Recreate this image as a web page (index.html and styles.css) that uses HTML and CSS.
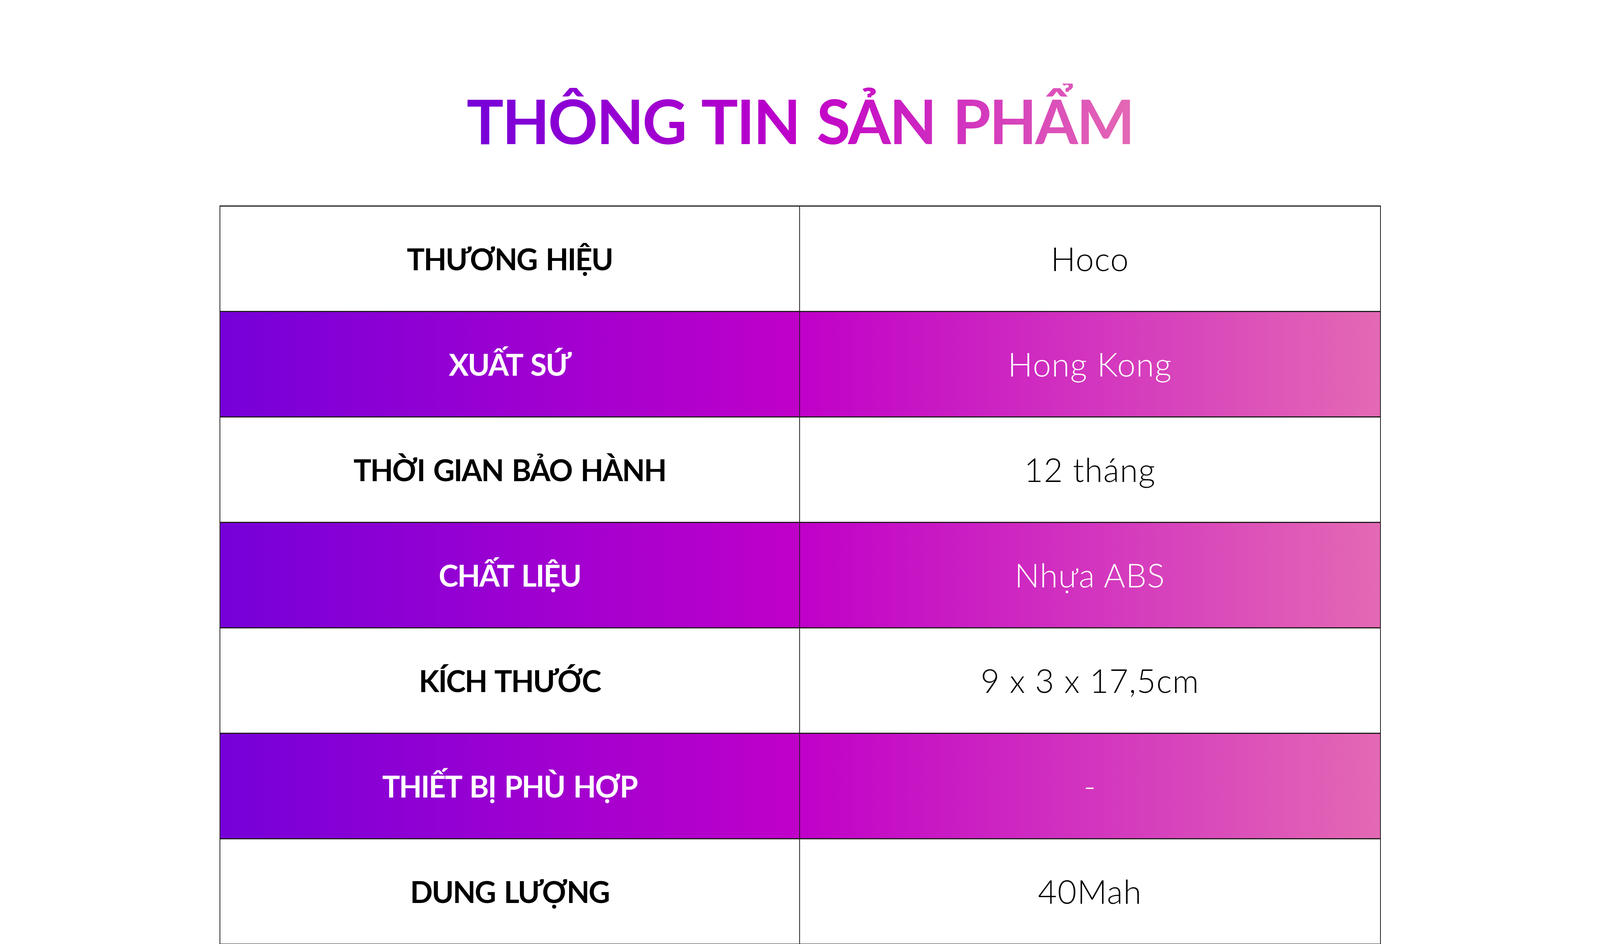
FILE: index.html
```html
<!DOCTYPE html>
<html lang="vi">
<head>
<meta charset="utf-8">
<title>Thông tin sản phẩm</title>
<link rel="stylesheet" href="styles.css">
</head>
<body>
<main class="page">
  <h1 class="title"><span class="title-text">THÔNG TIN SẢN PHẨM</span></h1>
  <div class="spec">
    <div class="row">
      <div class="cell label">THƯƠNG HIỆU</div>
      <div class="cell value">Hoco</div>
    </div>
    <div class="row row-accent">
      <div class="cell label">XUẤT SỨ</div>
      <div class="cell value">Hong Kong</div>
    </div>
    <div class="row">
      <div class="cell label">THỜI GIAN BẢO HÀNH</div>
      <div class="cell value">12 tháng</div>
    </div>
    <div class="row row-accent">
      <div class="cell label">CHẤT LIỆU</div>
      <div class="cell value">Nhựa ABS</div>
    </div>
    <div class="row">
      <div class="cell label">KÍCH THƯỚC</div>
      <div class="cell value">9 x 3 x 17,5cm</div>
    </div>
    <div class="row row-accent">
      <div class="cell label">THIẾT BỊ PHÙ HỢP</div>
      <div class="cell value">-</div>
    </div>
    <div class="row">
      <div class="cell label">DUNG LƯỢNG</div>
      <div class="cell value">40Mah</div>
    </div>
  </div>
</main>
</body>
</html>
```

FILE: styles.css
```css
html, body {
  margin: 0;
  padding: 0;
  background: #ffffff;
}

.page {
  font-family: Lato, "Noto Sans", sans-serif;
  padding-top: 214px;
}

.title {
  margin: 0 0 122px 0;
  text-align: center;
  font-size: 158px;
  line-height: 1.2;
  font-weight: 700;
  letter-spacing: -4px;
  word-spacing: 10px;
}

.title-text {
  display: inline-block;
  background: linear-gradient(90deg, #7600d9 0%, #c000c9 50%, #e469b4 100%);
  -webkit-background-clip: text;
  background-clip: text;
  color: transparent;
  -webkit-text-fill-color: transparent;
}

.spec {
  width: 2973px;
  margin: 0 auto;
  box-sizing: border-box;
  border-top: 3px solid #231f20;
  border-left: 2px solid #231f20;
  border-right: 2px solid #231f20;
}

.row {
  display: grid;
  grid-template-columns: 1fr 1fr;
  height: 270px;
  box-sizing: border-box;
  border-bottom: 3px solid #231f20;
  color: #000000;
}

.row-accent {
  background: linear-gradient(90deg, #7600d9 0%, #c000c9 50%, #e469b4 100%);
  color: #ffffff;
}

.cell {
  display: flex;
  align-items: center;
  justify-content: center;
  line-height: 1.2;
}

.label {
  font-size: 76px;
  font-weight: 700;
  letter-spacing: -2.5px;
  word-spacing: 6px;
  border-right: 2px solid #231f20;
}

.value {
  font-size: 84px;
  font-weight: 300;
  letter-spacing: 1.5px;
}
```
